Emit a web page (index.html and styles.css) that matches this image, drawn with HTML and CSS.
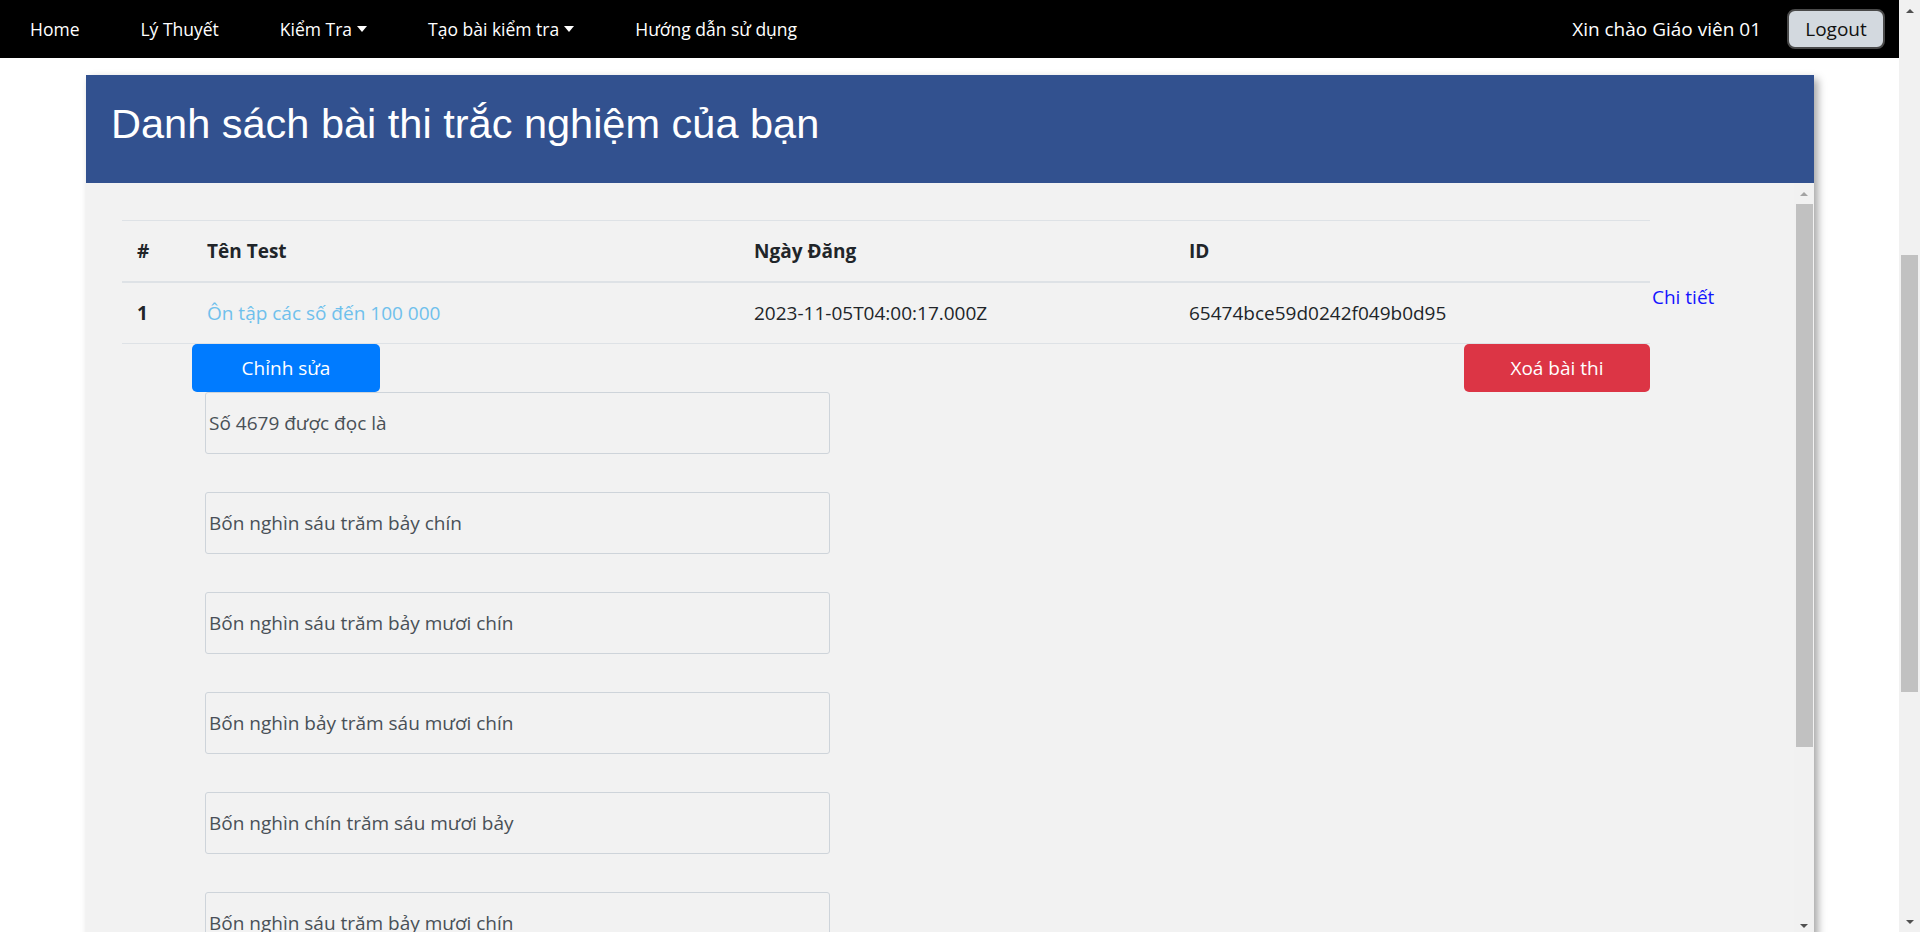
FILE: index.html
```html
<!DOCTYPE html>
<html lang="vi">
<head>
<meta charset="utf-8">
<title>Danh sách bài thi</title>
<link rel="stylesheet" href="styles.css">
</head>
<body>
<div class="page">
  <div class="main">
    <nav class="topnav">
      <div class="nav-left">
        <a class="nav-link" href="#">Home</a>
        <a class="nav-link" href="#">Lý Thuyết</a>
        <a class="nav-link" href="#">Kiểm Tra <span class="caret"></span></a>
        <a class="nav-link" href="#">Tạo bài kiểm tra <span class="caret"></span></a>
        <a class="nav-link" href="#">Hướng dẫn sử dụng</a>
      </div>
      <div class="nav-right">
        <span class="greet">Xin chào Giáo viên 01</span>
        <button class="logout">Logout</button>
      </div>
    </nav>
    <div class="content">
      <section class="panel">
        <header class="panel-head"><h1>Danh sách bài thi trắc nghiệm của bạn</h1></header>
        <div class="panel-body">
          <div class="panel-scroll">
            <table class="tests">
              <colgroup>
                <col class="c1"><col class="c2"><col class="c3"><col class="c4"><col class="c5">
              </colgroup>
              <thead>
                <tr><th>#</th><th>Tên Test</th><th>Ngày Đăng</th><th>ID</th><th class="detail"></th></tr>
              </thead>
              <tbody>
                <tr>
                  <td class="num">1</td>
                  <td><a class="test-link" href="#">Ôn tập các số đến 100 000</a></td>
                  <td>2023-11-05T04:00:17.000Z</td>
                  <td>65474bce59d0242f049b0d95</td>
                  <td class="detail"><a class="detail-link" href="#">Chi tiết</a></td>
                </tr>
              </tbody>
            </table>
            <div class="actions">
              <button class="btn btn-primary">Chỉnh sửa</button>
              <button class="btn btn-danger">Xoá bài thi</button>
            </div>
            <div class="answers">
              <div class="answer">Số 4679 được đọc là</div>
              <div class="answer">Bốn nghìn sáu trăm bảy chín</div>
              <div class="answer">Bốn nghìn sáu trăm bảy mươi chín</div>
              <div class="answer">Bốn nghìn bảy trăm sáu mươi chín</div>
              <div class="answer">Bốn nghìn chín trăm sáu mươi bảy</div>
              <div class="answer">Bốn nghìn sáu trăm bảy mươi chín</div>
            </div>
          </div>
          <div class="scrollbar inner-sb">
            <div class="sb-btn"><span class="arrow-up dim"></span></div>
            <div class="sb-thumb inner-thumb"></div>
            <div class="sb-space"></div>
            <div class="sb-btn"><span class="arrow-down"></span></div>
          </div>
        </div>
      </section>
    </div>
  </div>
  <div class="scrollbar page-sb">
    <div class="sb-btn"><span class="arrow-up"></span></div>
    <div class="sb-thumb page-thumb"></div>
    <div class="sb-space"></div>
    <div class="sb-btn"><span class="arrow-down"></span></div>
  </div>
</div>
</body>
</html>
```

FILE: styles.css
```css
html, body {
  margin: 0;
  height: 932px;
  overflow: hidden;
}
body {
  font-family: "Open Sans", "Noto Sans", sans-serif;
  font-size: 19px;
  color: #212529;
  background: #fff;
}
.page {
  display: flex;
  height: 932px;
}
.main {
  flex: 1;
  min-width: 0;
  display: flex;
  flex-direction: column;
}
.topnav {
  height: 58px;
  flex-shrink: 0;
  background: #000;
  display: flex;
  align-items: center;
  justify-content: space-between;
  padding: 0 14px 0 30px;
}
.nav-left {
  display: flex;
  align-items: center;
  gap: 61px;
}
.nav-link {
  color: #fff;
  text-decoration: none;
  font-size: 17.5px;
  display: flex;
  align-items: center;
}
.caret {
  display: inline-block;
  width: 0;
  height: 0;
  margin-left: 5px;
  border-left: 5px solid transparent;
  border-right: 5px solid transparent;
  border-top: 6px solid #fff;
}
.nav-right {
  display: flex;
  align-items: center;
  gap: 26px;
}
.greet {
  color: #fff;
  font-size: 19px;
}
.logout {
  width: 98px;
  height: 40px;
  background: #d3d9df;
  border: 2px solid #4a4a4a;
  border-radius: 8px;
  font-family: "Open Sans", sans-serif;
  font-size: 19px;
  color: #111;
  padding: 0;
}
.content {
  flex: 1;
  min-height: 0;
  padding: 17px 0 0 86px;
}
.panel {
  width: 1728px;
  background: #f2f2f2;
  box-shadow: 4px 4px 8px rgba(0, 0, 0, 0.35);
}
.panel-head {
  background: #32518f;
  height: 108px;
  box-sizing: border-box;
  padding: 26px 25px 0;
}
.panel-head h1 {
  margin: 0;
  font-family: "Liberation Sans", Arial, sans-serif;
  font-size: 41.5px;
  line-height: 46px;
  font-weight: 400;
  color: #fff;
}
.panel-body {
  display: flex;
  height: 753px;
}
.panel-scroll {
  flex: 1;
  min-width: 0;
  overflow: hidden;
  padding: 37px 0 0 36px;
}
.tests {
  border-collapse: collapse;
  table-layout: fixed;
  width: 1608px;
}
.c1 { width: 70px; }
.c2 { width: 547px; }
.c3 { width: 435px; }
.c4 { width: 476px; }
.c5 { width: 80px; }
.tests th,
.tests td {
  padding: 15px;
  line-height: 30px;
  text-align: left;
  vertical-align: top;
  border-top: 1px solid #dee2e6;
  white-space: nowrap;
}
.tests thead th {
  border-bottom: 2px solid #dee2e6;
  font-weight: 700;
}
.tests td.num {
  font-weight: 700;
}
.tests .detail {
  border: 0 none;
  padding: 0 0 0 2px;
}
.test-link {
  color: #6fc0ec;
  text-decoration: none;
}
.detail-link {
  color: #1414ff;
  text-decoration: none;
}
.actions {
  width: 1528px;
  box-sizing: border-box;
  border-top: 1px solid #dee2e6;
  padding-left: 70px;
  display: flex;
  justify-content: space-between;
}
.btn {
  height: 48px;
  border: 0;
  border-radius: 5px;
  color: #fff;
  font-family: "Open Sans", sans-serif;
  font-size: 19px;
  padding: 0;
}
.btn-primary {
  width: 188px;
  background: #007bff;
}
.btn-danger {
  width: 186px;
  background: #dc3545;
}
.answers {
  margin-left: 83px;
  display: flex;
  flex-direction: column;
  gap: 38px;
}
.answer {
  width: 625px;
  height: 62px;
  box-sizing: border-box;
  border: 1px solid #ced4da;
  border-radius: 3px;
  padding-left: 3px;
  display: flex;
  align-items: center;
  color: #495057;
  flex-shrink: 0;
}
.scrollbar {
  display: flex;
  flex-direction: column;
  background: #f1f1f1;
  flex-shrink: 0;
}
.inner-sb {
  width: 20px;
}
.page-sb {
  width: 21px;
  height: 932px;
}
.sb-btn {
  height: 21px;
  flex-shrink: 0;
  display: flex;
  align-items: center;
  justify-content: center;
}
.sb-space {
  flex: 1;
}
.arrow-up {
  width: 0;
  height: 0;
  border-left: 4px solid transparent;
  border-right: 4px solid transparent;
  border-bottom: 4px solid #505050;
}
.arrow-up.dim {
  border-bottom-color: #a3a3a3;
}
.arrow-down {
  width: 0;
  height: 0;
  border-left: 4px solid transparent;
  border-right: 4px solid transparent;
  border-top: 4px solid #505050;
}
.sb-thumb {
  background: #c1c1c1;
  flex-shrink: 0;
}
.inner-thumb {
  height: 543px;
  margin: 0 1px 0 2px;
}
.page-thumb {
  height: 437px;
  margin: 234px 2px 0 2px;
}
```
